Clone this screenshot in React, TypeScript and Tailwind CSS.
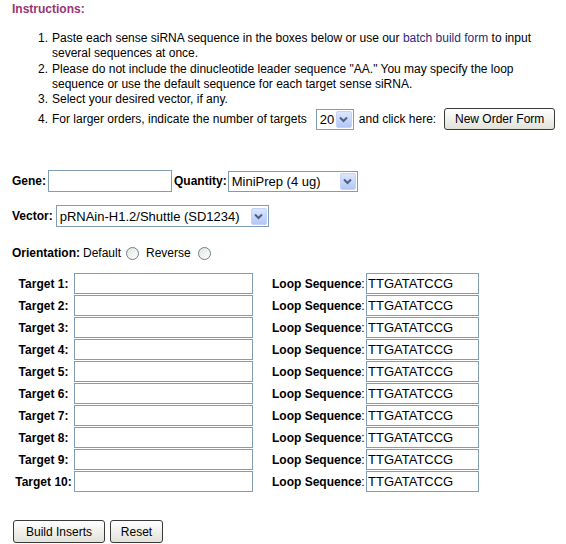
import React from "react";

const DropArrow = () => (
  <span className="flex h-[17px] w-[16px] items-center justify-center rounded-[2px] border border-[#c3d3fd] bg-linear-to-b from-[#dce6fd] to-[#b3c7f5]">
    <svg width="9" height="7" viewBox="0 0 9 7">
      <path d="M1 1.5 L4.5 5 L8 1.5" stroke="#4d6185" strokeWidth="2" fill="none" />
    </svg>
  </span>
);

const FakeSelect = ({ text, className }: { text: string; className: string }) => (
  <div
    className={`flex items-center justify-between border border-[#7f9db9] bg-white pl-[3px] pr-[1px] text-[13px] leading-none ${className}`}
  >
    <span>{text}</span>
    <DropArrow />
  </div>
);

const Radio = () => (
  <span className="inline-block h-[13px] w-[13px] rounded-full border border-[#6a7f95] bg-linear-to-br from-[#e4e4de] to-white" />
);

const XpButton = ({ label, className }: { label: string; className: string }) => (
  <button
    type="button"
    className={`rounded-[3px] border border-[#3a3a3a] bg-linear-to-b from-white to-[#e2e2da] text-[12px] leading-none text-black ${className}`}
  >
    {label}
  </button>
);

const targets = [1, 2, 3, 4, 5, 6, 7, 8, 9, 10];

export default function App() {
  return (
    <div className="h-[544px] w-[566px] overflow-hidden bg-white font-['Liberation_Sans',Arial,sans-serif] text-[12px] leading-[15px] text-black">
      {/* instructions */}
      <div className="pl-[12px] pt-[2px] font-bold text-[#993377]">Instructions:</div>

      <ol className="mt-[14px]">
        <li className="flex">
          <span className="w-[52px] pr-[4px] text-right">1.</span>
          <span>
            Paste each sense siRNA sequence in the boxes below or use our{" "}
            <span className="text-[#2b2b80]">batch build form</span> to input
            <br />
            several sequences at once.
          </span>
        </li>
        <li className="mt-[1px] flex">
          <span className="w-[52px] pr-[4px] text-right">2.</span>
          <span>
            Please do not include the dinucleotide leader sequence "AA." You may specify the loop
            <br />
            sequence or use the default sequence for each target sense siRNA.
          </span>
        </li>
        <li className="flex">
          <span className="w-[52px] pr-[4px] text-right">3.</span>
          <span>Select your desired vector, if any.</span>
        </li>
        <li className="mt-[1px] flex h-[22px] items-center">
          <span className="w-[52px] pr-[4px] text-right">4.</span>
          <span>For larger orders, indicate the number of targets</span>
          <FakeSelect text="20" className="ml-[9px] h-[21px] w-[38px]" />
          <span className="ml-[5px]">and click here:</span>
          <XpButton label="New Order Form" className="ml-[8px] h-[22px] w-[111px]" />
        </li>
      </ol>

      {/* gene / quantity */}
      <div className="mt-[40px] flex h-[22px] items-center pl-[12px]">
        <span className="font-bold">Gene:</span>
        <input
          className="ml-[2px] h-[22px] w-[124px] border border-[#7f9db9] bg-white px-[2px] text-[13px] outline-none"
          defaultValue=""
        />
        <span className="ml-[2px] font-bold">Quantity:</span>
        <FakeSelect text="MiniPrep (4 ug)" className="ml-[1px] h-[21px] w-[130px]" />
      </div>

      {/* vector */}
      <div className="mt-[13px] flex h-[22px] items-center pl-[12px]">
        <span className="font-bold">Vector:</span>
        <FakeSelect text="pRNAin-H1.2/Shuttle (SD1234)" className="ml-[3px] h-[22px] w-[213px]" />
      </div>

      {/* orientation */}
      <div className="mt-[18px] flex h-[16px] items-center pl-[12px]">
        <span className="font-bold">Orientation:</span>
        <span className="ml-[3px]">Default</span>
        <span className="ml-[5px] flex">
          <Radio />
        </span>
        <span className="ml-[7px]">Reverse</span>
        <span className="ml-[7px] flex">
          <Radio />
        </span>
      </div>

      {/* targets */}
      <div className="mt-[12px]">
        {targets.map((n) => (
          <div key={n} className="flex h-[22px] items-start">
            <span className="ml-[13px] flex h-[22px] w-[61px] items-center justify-center font-bold">
              Target {n}:
            </span>
            <input
              className="h-[21px] w-[179px] border border-[#7f9db9] bg-white px-[2px] text-[13px] outline-none"
              defaultValue=""
            />
            <span className="flex h-[22px] w-[113px] items-center pl-[19px]">
              <span className="font-bold">Loop Sequence</span>:
            </span>
            <input
              className="h-[21px] w-[113px] border border-[#7f9db9] bg-white px-[1px] text-[13px] outline-none"
              defaultValue="TTGATATCCG"
            />
          </div>
        ))}
      </div>

      {/* actions */}
      <div className="mt-[27px] flex gap-[5px] pl-[13px]">
        <XpButton label="Build Inserts" className="h-[23px] w-[92px]" />
        <XpButton label="Reset" className="h-[23px] w-[53px]" />
      </div>
    </div>
  );
}
